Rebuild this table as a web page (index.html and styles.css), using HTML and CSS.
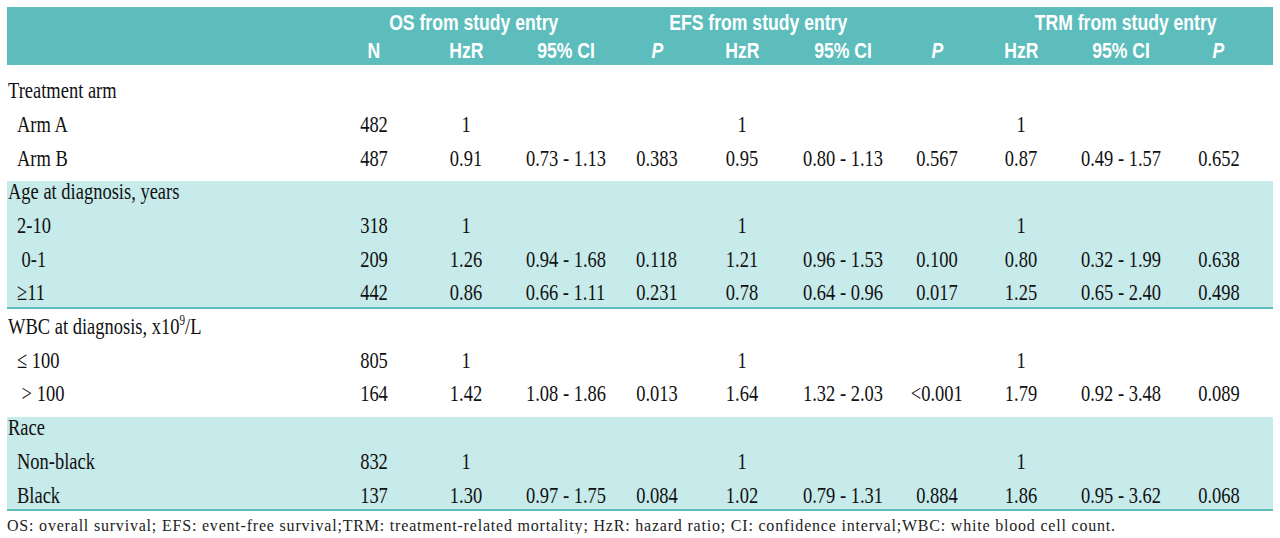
FILE: index.html
```html
<!DOCTYPE html>
<html lang="en">
<head>
<meta charset="utf-8">
<title>Hazard ratios table</title>
<link rel="stylesheet" href="styles.css">
</head>
<body>
<div class="page">
  <table class="tbl">
    <colgroup>
      <col class="c-label"><col class="c-n"><col class="c-hzr1"><col class="c-ci1"><col class="c-p1">
      <col class="c-hzr2"><col class="c-ci2"><col class="c-p2"><col class="c-hzr3"><col class="c-ci3"><col class="c-p3">
    </colgroup>
    <thead>
      <tr class="h1">
        <th></th>
        <th colspan="3" class="g-os"><span class="ht">OS from study entry</span></th>
        <th colspan="3" class="g-efs"><span class="ht">EFS from study entry</span></th>
        <th></th>
        <th colspan="3" class="g-trm"><span class="ht">TRM from study entry</span></th>
      </tr>
      <tr class="h2">
        <th></th>
        <th><span class="ht">N</span></th><th><span class="ht">HzR</span></th><th><span class="ht">95% CI</span></th><th><span class="ht"><i>P</i></span></th>
        <th><span class="ht">HzR</span></th><th><span class="ht">95% CI</span></th><th><span class="ht"><i>P</i></span></th>
        <th><span class="ht">HzR</span></th><th><span class="ht">95% CI</span></th><th class="last"><span class="ht"><i>P</i></span></th>
      </tr>
    </thead>
    <tbody class="plain top">
      <tr><td colspan="11" class="lab"><span class="t">Treatment arm</span></td></tr>
      <tr><td class="lab sub"><span class="t">Arm A</span></td><td><span class="t">482</span></td><td><span class="t">1</span></td><td></td><td></td><td><span class="t">1</span></td><td></td><td></td><td><span class="t">1</span></td><td></td><td class="last"></td></tr>
      <tr><td class="lab sub"><span class="t">Arm B</span></td><td><span class="t">487</span></td><td><span class="t">0.91</span></td><td><span class="t">0.73 - 1.13</span></td><td><span class="t">0.383</span></td><td><span class="t">0.95</span></td><td><span class="t">0.80 - 1.13</span></td><td><span class="t">0.567</span></td><td><span class="t">0.87</span></td><td><span class="t">0.49 - 1.57</span></td><td class="last"><span class="t">0.652</span></td></tr>
    </tbody>
    <tbody class="band">
      <tr><td colspan="11" class="lab"><span class="t">Age at diagnosis, years</span></td></tr>
      <tr><td class="lab sub"><span class="t">2-10</span></td><td><span class="t">318</span></td><td><span class="t">1</span></td><td></td><td></td><td><span class="t">1</span></td><td></td><td></td><td><span class="t">1</span></td><td></td><td class="last"></td></tr>
      <tr><td class="lab sub"><span class="t">&nbsp;0-1</span></td><td><span class="t">209</span></td><td><span class="t">1.26</span></td><td><span class="t">0.94 - 1.68</span></td><td><span class="t">0.118</span></td><td><span class="t">1.21</span></td><td><span class="t">0.96 - 1.53</span></td><td><span class="t">0.100</span></td><td><span class="t">0.80</span></td><td><span class="t">0.32 - 1.99</span></td><td class="last"><span class="t">0.638</span></td></tr>
      <tr><td class="lab sub"><span class="t">≥11</span></td><td><span class="t">442</span></td><td><span class="t">0.86</span></td><td><span class="t">0.66 - 1.11</span></td><td><span class="t">0.231</span></td><td><span class="t">0.78</span></td><td><span class="t">0.64 - 0.96</span></td><td><span class="t">0.017</span></td><td><span class="t">1.25</span></td><td><span class="t">0.65 - 2.40</span></td><td class="last"><span class="t">0.498</span></td></tr>
    </tbody>
    <tbody class="plain">
      <tr><td colspan="11" class="lab"><span class="t">WBC at diagnosis, x10<sup>9</sup>/L</span></td></tr>
      <tr><td class="lab sub"><span class="t">≤ 100</span></td><td><span class="t">805</span></td><td><span class="t">1</span></td><td></td><td></td><td><span class="t">1</span></td><td></td><td></td><td><span class="t">1</span></td><td></td><td class="last"></td></tr>
      <tr><td class="lab sub"><span class="t">&nbsp;&gt; 100</span></td><td><span class="t">164</span></td><td><span class="t">1.42</span></td><td><span class="t">1.08 - 1.86</span></td><td><span class="t">0.013</span></td><td><span class="t">1.64</span></td><td><span class="t">1.32 - 2.03</span></td><td><span class="t">&lt;0.001</span></td><td><span class="t">1.79</span></td><td><span class="t">0.92 - 3.48</span></td><td class="last"><span class="t">0.089</span></td></tr>
    </tbody>
    <tbody class="band">
      <tr><td colspan="11" class="lab"><span class="t">Race</span></td></tr>
      <tr><td class="lab sub"><span class="t">Non-black</span></td><td><span class="t">832</span></td><td><span class="t">1</span></td><td></td><td></td><td><span class="t">1</span></td><td></td><td></td><td><span class="t">1</span></td><td></td><td class="last"></td></tr>
      <tr><td class="lab sub"><span class="t">Black</span></td><td><span class="t">137</span></td><td><span class="t">1.30</span></td><td><span class="t">0.97 - 1.75</span></td><td><span class="t">0.084</span></td><td><span class="t">1.02</span></td><td><span class="t">0.79 - 1.31</span></td><td><span class="t">0.884</span></td><td><span class="t">1.86</span></td><td><span class="t">0.95 - 3.62</span></td><td class="last"><span class="t">0.068</span></td></tr>
    </tbody>
  </table>
  <p class="note">OS: overall survival; EFS: event-free survival;TRM: treatment-related mortality; HzR: hazard ratio; CI: confidence interval;WBC: white blood cell count.</p>
</div>
</body>
</html>
```

FILE: styles.css
```css
html, body {
  margin: 0;
  background: #ffffff;
}

.page {
  padding: 7px 7px 0;
}

.tbl {
  width: 1266px;
  table-layout: fixed;
  border-collapse: separate;
  border-spacing: 0;
  font-family: "Liberation Serif", "Times New Roman", serif;
  font-size: 24px;
  line-height: 20px;
  color: #111111;
}

.c-label { width: 321px; }
.c-n { width: 92px; }
.c-hzr1 { width: 92px; }
.c-ci1 { width: 108px; }
.c-p1 { width: 74px; }
.c-hzr2 { width: 96px; }
.c-ci2 { width: 106px; }
.c-p2 { width: 82px; }
.c-hzr3 { width: 86px; }
.c-ci3 { width: 114px; }
.c-p3 { width: 95px; }

/* header */
.tbl th {
  background: #5dbdbd;
  color: #ffffff;
  font-family: "Liberation Sans", Arial, sans-serif;
  font-weight: bold;
  font-size: 22px;
  line-height: 21px;
  text-align: center;
  white-space: nowrap;
  padding: 0;
}

.ht {
  display: inline-block;
  transform: scaleX(0.8);
}

.tbl th i {
  font-style: italic;
}

.h1 th {
  padding-top: 5px;
}

.h2 th {
  padding-top: 7px;
  padding-bottom: 4px;
}

.g-os { padding-left: 7px; }
.g-trm { padding-left: 32px; }

.tbl th.last,
.tbl td.last {
  padding-right: 14px;
}

/* body cells */
.tbl td {
  text-align: center;
  white-space: nowrap;
  padding: 7px 0 6.75px;
}

.tbl td.lab {
  text-align: left;
  padding-left: 1px;
}

.tbl td.sub {
  padding-left: 10px;
}

.t {
  display: inline-block;
  transform: scaleX(0.77);
}

.lab .t {
  transform-origin: 0 50%;
}

.t sup {
  font-size: 60%;
  line-height: 0;
  vertical-align: 9px;
}

.top tr:first-child td {
  padding-top: 15px;
}

.plain tr:last-child td {
  padding-bottom: 13.6px;
}

.band td {
  background: #c7eaea;
}

.band tr:first-child td {
  padding-top: 0;
}

.band tr:last-child td {
  padding-bottom: 4.6px;
  border-bottom: 2px solid #5dbdbd;
}

.note {
  margin: 0;
  padding-top: 7px;
  font-family: "Liberation Serif", "Times New Roman", serif;
  font-size: 16px;
  line-height: 16px;
  letter-spacing: 0.8px;
  color: #222222;
  white-space: nowrap;
}
```
